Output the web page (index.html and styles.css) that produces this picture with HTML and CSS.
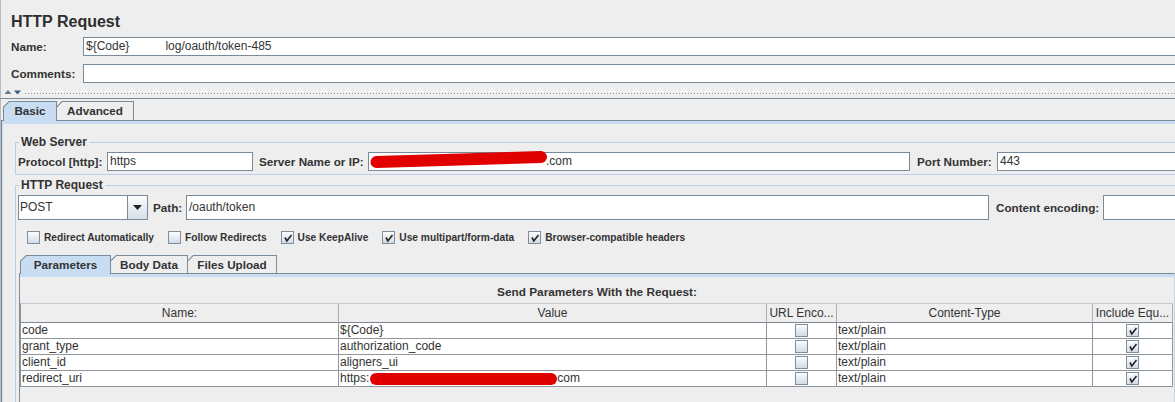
FILE: index.html
```html
<!DOCTYPE html>
<html>
<head>
<meta charset="utf-8">
<title>HTTP Request</title>
<link rel="stylesheet" href="styles.css">
</head>
<body>
<header class="head">
  <h1 class="title">HTTP Request</h1>
  <div class="frow"><span class="flabel">Name:</span><div class="tf tf-wide">${Code}<span class="gap"></span>log/oauth/token-485</div></div>
  <div class="frow frow2"><span class="flabel">Comments:</span><div class="tf tf-wide"></div></div>
</header>

<div class="splitter">
  <svg class="arrows" width="22" height="5" viewBox="0 0 22 5"><polygon points="5,0 8.5,4 1.5,4" fill="#61788F"/><polygon points="11,0.5 18,0.5 14.5,4.5" fill="#3F5875"/></svg>
  <div class="dots"></div>
</div>

<div class="tabs tabs-outer">
  <div class="tab sel t-basic">Basic</div>
  <div class="tab t-adv">Advanced</div>
</div>

<div class="panel-outer">
  <fieldset class="group g-web">
    <legend>Web Server</legend>
    <div class="row">
      <span class="lbl l-proto">Protocol [http]:</span>
      <div class="tf tf-proto">https</div>
      <span class="lbl l-server">Server Name or IP:</span>
      <div class="tf tf-server"><span class="red-wrap"><svg class="red-srv" width="177" height="20" viewBox="0 0 177 20"><path d="M6.5 13 Q 70 11 171 8" stroke="#E00000" stroke-width="12" stroke-linecap="round" fill="none"/></svg></span>.com</div>
      <span class="lbl l-port">Port Number:</span>
      <div class="tf tf-port">443</div>
    </div>
  </fieldset>

  <fieldset class="group g-http">
    <legend>HTTP Request</legend>
    <div class="row row-req">
      <div class="combo">
        <span class="combo-val">POST</span>
        <span class="combo-btn"><svg width="9" height="5" viewBox="0 0 9 5"><polygon points="0,0 9,0 4.5,5" fill="#222"/></svg></span>
      </div>
      <span class="lbl l-path">Path:</span>
      <div class="tf tf-path">/oauth/token</div>
      <span class="lbl l-enc">Content encoding:</span>
      <div class="tf tf-enc"></div>
    </div>

    <div class="checks">
      <label class="chk"><span class="box"></span>Redirect Automatically</label>
      <label class="chk"><span class="box"></span>Follow Redirects</label>
      <label class="chk"><span class="box on"><svg width="11" height="11" viewBox="0 0 11 11"><path d="M3 5.5 L4.8 9 L9.5 3"/></svg></span>Use KeepAlive</label>
      <label class="chk"><span class="box on"><svg width="11" height="11" viewBox="0 0 11 11"><path d="M3 5.5 L4.8 9 L9.5 3"/></svg></span>Use multipart/form-data</label>
      <label class="chk"><span class="box on"><svg width="11" height="11" viewBox="0 0 11 11"><path d="M3 5.5 L4.8 9 L9.5 3"/></svg></span>Browser-compatible headers</label>
    </div>

    <div class="tabs tabs-inner">
      <div class="tab itab sel t-par">Parameters</div>
      <div class="tab itab t-body">Body Data</div>
      <div class="tab itab t-files">Files Upload</div>
    </div>

    <div class="panel-inner">
      <div class="ptitle">Send Parameters With the Request:</div>
      <table class="params">
        <thead>
          <tr><th class="c-name">Name:</th><th class="c-val">Value</th><th class="c-url">URL Enco...</th><th class="c-ct">Content-Type</th><th class="c-inc">Include Equ...</th></tr>
        </thead>
        <tbody>
          <tr><td>code</td><td>${Code}</td><td class="cb"><span class="box"></span></td><td>text/plain</td><td class="cb"><span class="box on"><svg width="11" height="11" viewBox="0 0 11 11"><path d="M3 5.5 L4.8 9 L9.5 3"/></svg></span></td></tr>
          <tr><td>grant_type</td><td>authorization_code</td><td class="cb"><span class="box"></span></td><td>text/plain</td><td class="cb"><span class="box on"><svg width="11" height="11" viewBox="0 0 11 11"><path d="M3 5.5 L4.8 9 L9.5 3"/></svg></span></td></tr>
          <tr><td>client_id</td><td>aligners_ui</td><td class="cb"><span class="box"></span></td><td>text/plain</td><td class="cb"><span class="box on"><svg width="11" height="11" viewBox="0 0 11 11"><path d="M3 5.5 L4.8 9 L9.5 3"/></svg></span></td></tr>
          <tr><td>redirect_uri</td><td class="red-cell">https:<span class="red-uri"></span>com</td><td class="cb"><span class="box"></span></td><td>text/plain</td><td class="cb"><span class="box on"><svg width="11" height="11" viewBox="0 0 11 11"><path d="M3 5.5 L4.8 9 L9.5 3"/></svg></span></td></tr>
        </tbody>
      </table>
    </div>
  </fieldset>
</div>
</body>
</html>
```

FILE: styles.css
```css
* { box-sizing: border-box; }
html, body { margin: 0; padding: 0; }
body {
  width: 1175px;
  height: 402px;
  overflow: hidden;
  background: #EEEEEE;
  color: #333333;
  font-family: "Liberation Sans", Arial, sans-serif;
  box-shadow: inset 1px 0 0 #B9BDC2;
}

/* ---------- header ---------- */
.head { padding: 12px 0 0 11px; }
.title { margin: 0; font-size: 16px; line-height: 19px; font-weight: bold; color: #2E2E2E; }
.frow { display: flex; align-items: center; margin-top: 6px; margin-right: -8px; }
.frow2 { margin-top: 8px; }
.flabel { width: 72px; flex: none; font-weight: bold; font-size: 11.7px; }

.tf {
  height: 19px;
  background: #FFFFFF;
  border: 1px solid #7A8A99;
  font-size: 12px;
  line-height: 17px;
  padding: 0 2px;
  white-space: nowrap;
  overflow: hidden;
  flex: none;
}
.tf-wide { flex: 1; }
.gap { display: inline-block; width: 36px; }

/* ---------- splitter ---------- */
.splitter {
  height: 16px;
  display: flex;
  align-items: flex-start;
  padding-left: 3px;
  border-bottom: 1px solid #7A8A99;
}
.arrows { margin-top: 7px; flex: none; }
.dots {
  flex: 1;
  height: 4px;
  margin-top: 7px;
  background-image:
    linear-gradient(90deg, #8593A1 1px, transparent 1px),
    linear-gradient(90deg, #FFFFFF 1px, transparent 1px);
  background-size: 3px 1px, 3px 1px;
  background-position: 0 3px, 1px 1px;
  background-repeat: repeat-x;
}

/* ---------- tabs ---------- */
.tabs { display: flex; align-items: flex-start; }
.tabs-outer { margin-top: 2px; height: 19px; padding-left: 3px; }
.tabs-inner { margin-top: 11px; height: 18px; margin-left: 1px; padding-left: 1px; }

.tab {
  height: 19px;
  border: 1px solid #7A8A99;
  border-bottom: none;
  background: linear-gradient(135deg, transparent 4.2px, #7A8A99 4.2px, #7A8A99 5.4px, transparent 5.4px) border-box #EEEEEE;
  clip-path: polygon(6px 0, 100% 0, 100% 100%, 0 100%, 0 6px);
  font-weight: bold;
  font-size: 11.7px;
  line-height: 18px;
  text-align: center;
  white-space: nowrap;
  flex: none;
}
.tab + .tab { margin-left: -1px; }
.tab.sel {
  height: 20px;
  position: relative;
  z-index: 1;
  background: linear-gradient(135deg, transparent 4.2px, #7A8A99 4.2px, #7A8A99 5.4px, transparent 5.4px) border-box #C8DDF2;
}
.itab { height: 18px; line-height: 17px; }
.itab.sel { height: 19px; }

.t-basic { width: 54px; }
.t-adv { width: 78px; }
.t-par { width: 91px; }
.t-body { width: 78px; }
.t-files { width: 90px; }

/* ---------- outer panel ---------- */
.panel-outer {
  margin-left: 1px;
  border-top: 1px solid #7A8A99;
  border-left: 1px solid #7A8A99;
  box-shadow: inset 1px 3px 0 #C8DDF2;
  padding: 14px 0 0 13px;
  height: 300px;
}

.group {
  width: 1164px;
  min-width: 0;
  margin: 0;
  padding: 3px 2px 3px 2px;
  border: 1px solid #B8CFE5;
}
.group legend {
  font-weight: bold;
  font-size: 12px;
  line-height: 14px;
  padding: 0 2px;
  margin-left: 1px;
}
.g-http { margin-top: 3px; }

.row { display: flex; align-items: center; }
.lbl { font-weight: bold; font-size: 11.7px; flex: none; white-space: nowrap; }

.l-proto { width: 89px; }
.tf-proto { width: 146px; }
.l-server { width: 109px; margin-left: 6px; }
.tf-server { flex: 1; overflow: visible; }
.l-port { width: 80px; margin-left: 7px; }
.tf-port { width: 179px; }

/* redaction mark lying over the hidden host name */
.red-wrap {
  display: inline-block;
  position: relative;
  width: 176px;
  height: 12px;
  margin-left: -1px;
  vertical-align: -2px;
}
.red-srv { position: absolute; left: 0; top: -6px; }

/* request row */
.row-req .tf { height: 25px; line-height: 23px; }
.combo {
  width: 130px;
  height: 25px;
  flex: none;
  display: flex;
  border: 1px solid #7A8A99;
  background: #FFFFFF;
}
.combo-val { flex: 1; font-size: 12px; line-height: 23px; padding-left: 1px; }
.combo-btn {
  width: 20px;
  border-left: 1px solid #7A8A99;
  background: linear-gradient(#FBFCFD, #D6DFE8);
  display: flex;
  align-items: center;
  justify-content: center;
}
.l-path { width: 33px; margin-left: 5px; }
.tf-path { flex: 1; }
.l-enc { width: 107px; margin-left: 7px; }
.tf-enc { width: 73px; }

/* checkboxes */
.checks {
  display: flex;
  align-items: center;
  gap: 14px;
  margin-top: 11px;
  padding-left: 9px;
  height: 13px;
}
.chk {
  display: flex;
  align-items: center;
  gap: 4px;
  font-weight: bold;
  font-size: 10.2px;
  white-space: nowrap;
}
.box {
  display: block;
  width: 13px;
  height: 13px;
  flex: none;
  border: 1px solid #7F8E9D;
  background: linear-gradient(#FCFDFE, #D2DBE5);
}
.box svg { display: block; }
.box svg path { fill: none; stroke: #2A2A2A; stroke-width: 1.7; }

/* ---------- inner panel ---------- */
.panel-inner {
  margin: 0 1px;
  border-top: 1px solid #7A8A99;
  border-left: 1px solid #7A8A99;
  border-right: 1px solid #C9D3DD;
  box-shadow: inset 0 3px 0 #C8DDF2;
  padding-top: 11px;
  height: 200px;
}
.ptitle {
  text-align: center;
  font-weight: bold;
  font-size: 11.8px;
  line-height: 14px;
}

.params {
  margin-top: 4px;
  width: 1153px;
  table-layout: fixed;
  border-collapse: separate;
  border-spacing: 0;
  border-left: 1px solid #8E969E;
  border-top: 1px solid #C3CAD1;
  font-size: 12px;
}
.params th {
  height: 19px;
  padding: 0;
  font-weight: normal;
  line-height: 18px;
  text-align: center;
  white-space: nowrap;
  overflow: hidden;
  border-right: 1px solid #A7B0B8;
  border-bottom: 1px solid #7E8791;
  background: #EEEEEE;
}
.c-name { width: 318px; }
.c-val { width: 428px; }
.c-url { width: 70px; }
.c-ct { width: 256px; }
.c-inc { width: 80px; }

.params td {
  height: 16px;
  padding: 0 1px;
  line-height: 15px;
  background: #FFFFFF;
  white-space: nowrap;
  overflow: hidden;
  border-right: 1px solid #8E969E;
  border-bottom: 1px solid #8E969E;
}
.params td.cb .box { margin: 0 auto; }
.params td.red-cell { overflow: visible; }
.red-uri {
  display: inline-block;
  width: 187px;
  height: 12px;
  margin-left: 1px;
  vertical-align: -3px;
  background: #E00000;
  border-radius: 6px;
}
```
